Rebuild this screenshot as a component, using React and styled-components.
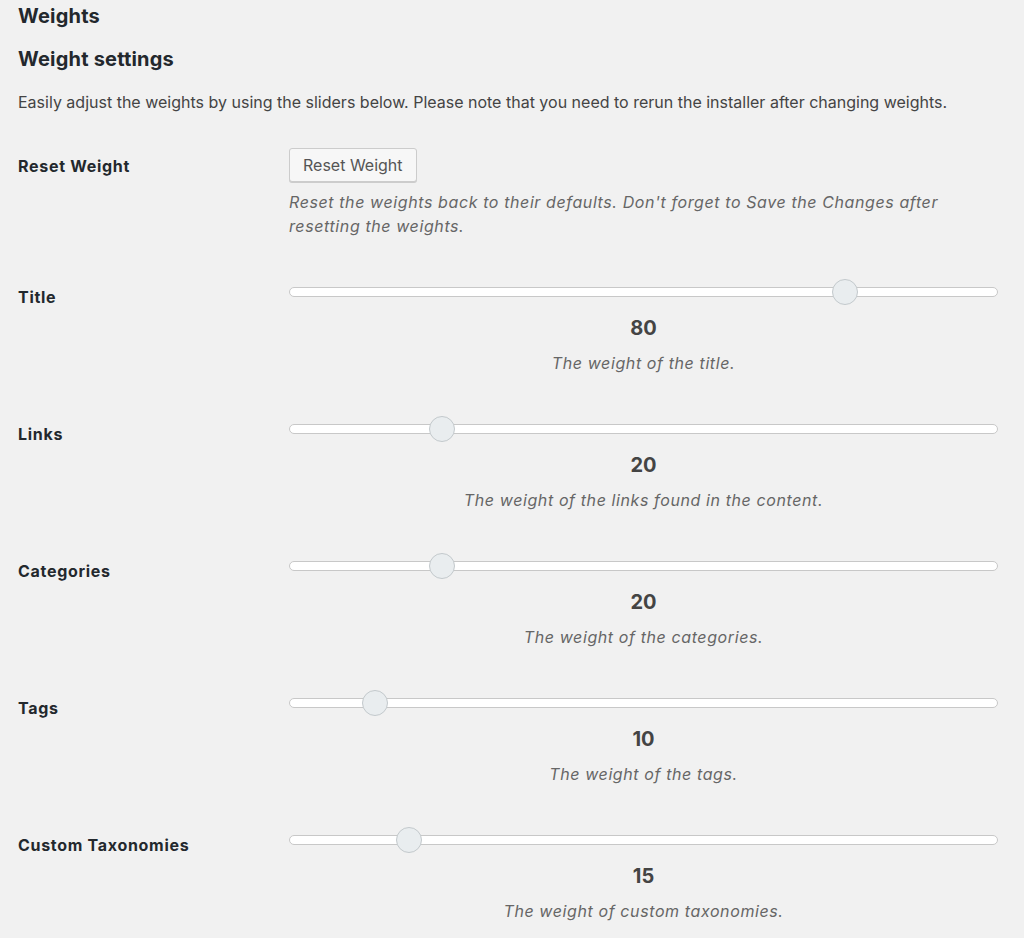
import React from "react";
import styled, { createGlobalStyle } from "styled-components";

const Global = createGlobalStyle`
  html, body { margin: 0; padding: 0; background: #f1f1f1; }
  body { font-family: Inter, "Liberation Sans", Arial, sans-serif; color: #444; }
`;

const Page = styled.div`
  padding: 4px 26px 40px 18px;
  display: flex;
  flex-direction: column;
`;

const Heading = styled.h2`
  margin: 0 0 ${(p) => p.$gap}px;
  font-size: 20px;
  line-height: 24px;
  font-weight: 700;
  letter-spacing: 0.2px;
  color: #23282d;
`;

const Intro = styled.p`
  margin: 0 0 34px;
  font-size: 16px;
  line-height: 24px;
  color: #444;
`;

const Rows = styled.div`
  display: flex;
  flex-direction: column;
  gap: 41px;
`;

const Row = styled.div`
  display: grid;
  grid-template-columns: 271px 1fr;
`;

const Label = styled.div`
  padding-top: 6px;
  font-size: 16px;
  line-height: 24px;
  font-weight: 700;
  letter-spacing: 0.7px;
  color: #23282d;
`;

const Cell = styled.div`
  display: flex;
  flex-direction: column;
  align-items: ${(p) => (p.$center ? "center" : "flex-start")};
`;

const Button = styled.button`
  height: 34px;
  padding: 0 13px;
  margin: 0;
  font-family: inherit;
  font-size: 16px;
  color: #555;
  background: #f7f7f7;
  border: 1px solid #cccccc;
  border-radius: 3px;
  box-shadow: 0 1px 0 #cccccc;
  cursor: pointer;
`;

const Help = styled.p`
  margin: ${(p) => (p.$center ? 11 : 8)}px 0 0;
  font-size: 16px;
  line-height: 24px;
  font-style: italic;
  letter-spacing: 0.6px;
  color: #666;
  text-align: ${(p) => (p.$center ? "center" : "left")};
`;

const SliderBox = styled.div`
  position: relative;
  align-self: stretch;
  height: 26px;
  display: flex;
  align-items: center;
`;

const Track = styled.div`
  flex: 1;
  height: 8px;
  background: #fff;
  border: 1px solid #c8c8c8;
  border-radius: 6px;
`;

const Thumb = styled.div`
  position: absolute;
  top: 0;
  width: 24px;
  height: 24px;
  border-radius: 50%;
  background: #e9edef;
  border: 1px solid #c3c9cc;
`;

const Value = styled.div`
  margin-top: 11px;
  font-size: 20px;
  line-height: 24px;
  font-weight: 700;
  color: #444;
`;

const sliders = [
  { label: "Title", value: 80, desc: "The weight of the title." },
  { label: "Links", value: 20, desc: "The weight of the links found in the content." },
  { label: "Categories", value: 20, desc: "The weight of the categories." },
  { label: "Tags", value: 10, desc: "The weight of the tags." },
  { label: "Custom Taxonomies", value: 15, desc: "The weight of custom taxonomies." },
];

function Slider({ value }) {
  return (
    <SliderBox>
      <Track />
      <Thumb style={{ left: `calc(19px + (100% - 38px) * ${value / 100} - 13px)` }} />
    </SliderBox>
  );
}

export default function App() {
  return (
    <>
      <Global />
      <Page>
        <Heading $gap={19}>Weights</Heading>
        <Heading $gap={19}>Weight settings</Heading>
        <Intro>
          Easily adjust the weights by using the sliders below. Please note that you need to rerun the installer after changing weights.
        </Intro>
        <Rows>
          <Row>
            <Label>Reset Weight</Label>
            <Cell>
              <Button type="button">Reset Weight</Button>
              <Help>
                Reset the weights back to their defaults. Don't forget to Save the Changes after resetting the weights.
              </Help>
            </Cell>
          </Row>
          {sliders.map((s) => (
            <Row key={s.label}>
              <Label>{s.label}</Label>
              <Cell $center>
                <Slider value={s.value} />
                <Value>{s.value}</Value>
                <Help $center>{s.desc}</Help>
              </Cell>
            </Row>
          ))}
        </Rows>
      </Page>
    </>
  );
}
